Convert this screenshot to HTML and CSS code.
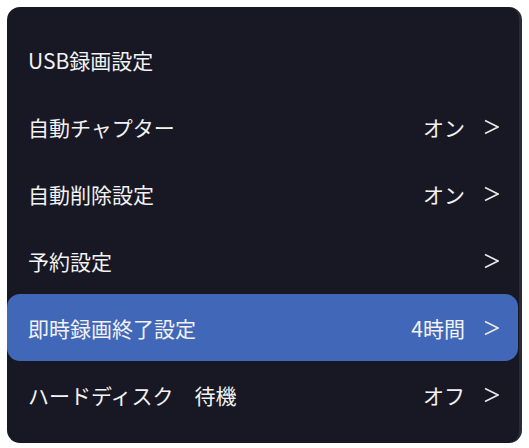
FILE: index.html
```html
<!DOCTYPE html>
<html lang="ja">
<head>
  <meta charset="UTF-8">
  <title>USB録画設定</title>
  <link rel="stylesheet" href="styles.css">
</head>
<body>
  <div class="panel">
    <div class="title">USB録画設定</div>
    <ul class="menu">
      <li class="item">
        <span class="label">自動チャプター</span>
        <span class="value">オン</span>
        <svg class="chev" viewBox="0 0 15 16"><polyline points="1,1.5 14,8 1,14.5"/></svg>
      </li>
      <li class="item">
        <span class="label">自動削除設定</span>
        <span class="value">オン</span>
        <svg class="chev" viewBox="0 0 15 16"><polyline points="1,1.5 14,8 1,14.5"/></svg>
      </li>
      <li class="item">
        <span class="label">予約設定</span>
        <span class="value"></span>
        <svg class="chev" viewBox="0 0 15 16"><polyline points="1,1.5 14,8 1,14.5"/></svg>
      </li>
      <li class="item active">
        <span class="label">即時録画終了設定</span>
        <span class="value">4時間</span>
        <svg class="chev" viewBox="0 0 15 16"><polyline points="1,1.5 14,8 1,14.5"/></svg>
      </li>
      <li class="item">
        <span class="label">ハードディスク　待機</span>
        <span class="value">オフ</span>
        <svg class="chev" viewBox="0 0 15 16"><polyline points="1,1.5 14,8 1,14.5"/></svg>
      </li>
    </ul>
  </div>
</body>
</html>
```

FILE: styles.css
```css
body { margin: 0; background: #fff; font-family: "Noto Sans CJK JP", "Noto Sans", sans-serif; }
.panel { margin: 7px 7px 5px 7px; height: 436px; box-sizing: border-box; padding: 19px 0 14px; background: #181825; border-radius: 13px; border-right: 3px solid #2a2a33; color: #f2f2f2; }
.title { height: 67px; display: flex; align-items: center; padding-left: 21px; font-size: 21px; }
.menu { list-style: none; margin: 0; padding: 0; }
.item { height: 67px; display: flex; align-items: center; padding: 0 19px 0 21px; margin-right: 1px; font-size: 21px; border-radius: 13px; }
.item.active { background: #4167b9; }
.label { flex: 1; }
.value { margin-right: 19px; }
.chev { width: 15px; height: 16px; fill: none; stroke: #e8e8e8; stroke-width: 1.6; }
```
